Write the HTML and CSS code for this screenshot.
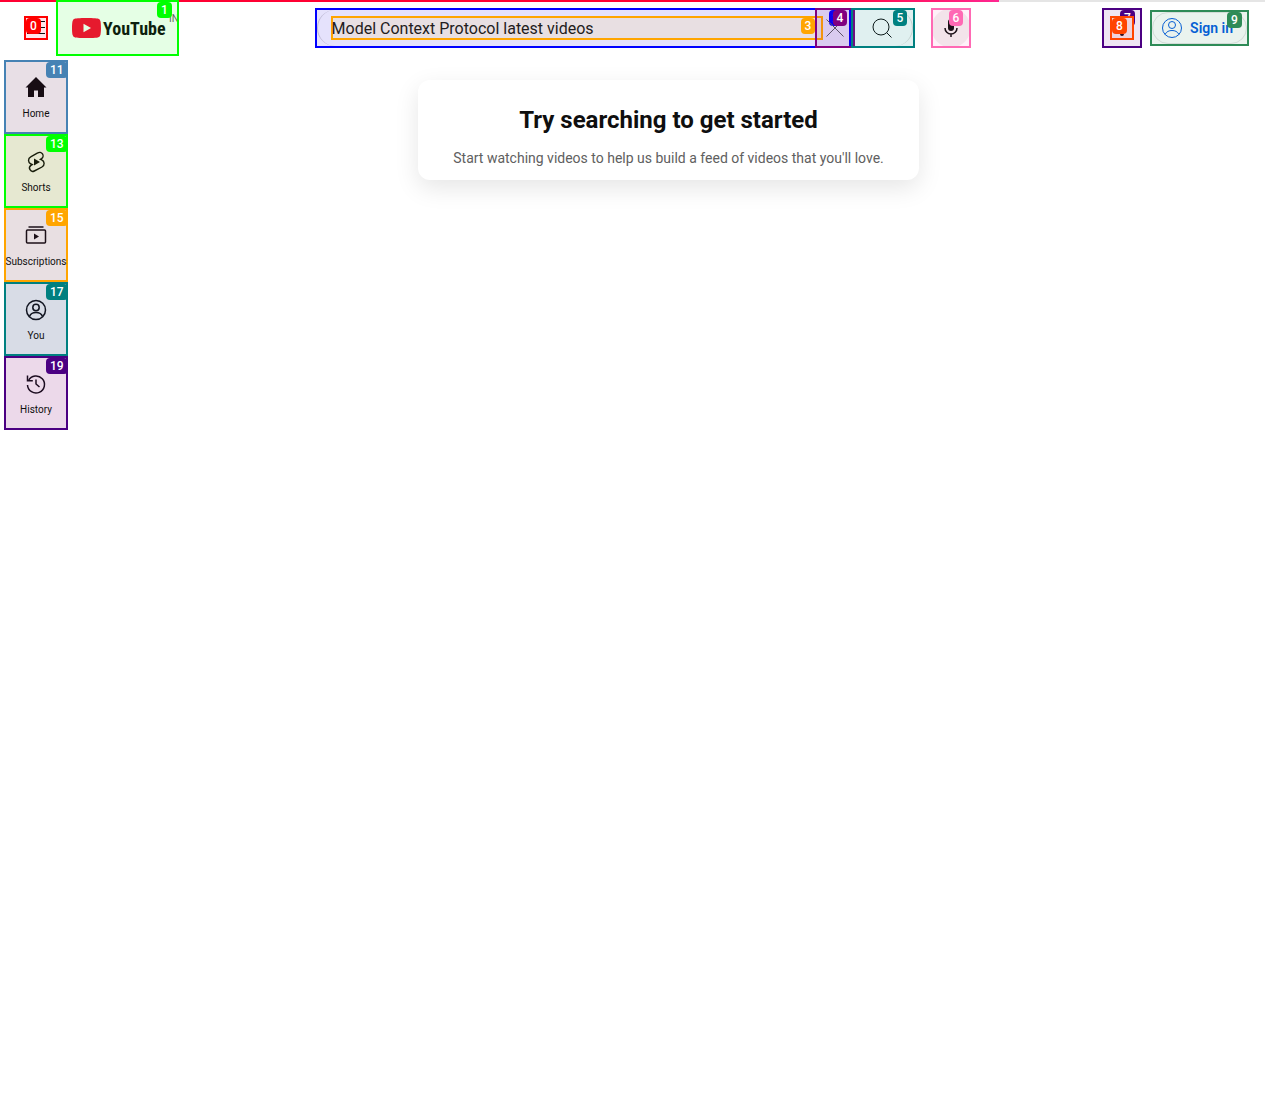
FILE: index.html
```html
<!DOCTYPE html>
<html lang="en">
<head>
<meta charset="utf-8">
<meta name="viewport" content="width=device-width, initial-scale=1">
<title>YouTube</title>
<link rel="stylesheet" href="styles.css">
</head>
<body>
<div class="progress"><div class="progress-fill"></div></div>
<header class="masthead">
  <div class="start">
    <button class="menu mark red" type="button" aria-label="Guide">
      <svg width="24" height="24" viewBox="0 0 24 24"><path d="M3 5.500h18M3 11.500h18M3 17.500h18" stroke="#0f0f0f" fill="none"/></svg>
      <span class="tag">0</span>
    </button>
    <a class="logo mark lime" href="#" aria-label="YouTube Home">
      <svg width="29" height="20" viewBox="0 0 29 20"><path d="M28.400 3.100A3.600 3.600 0 0 0 25.800.600C23.500 0 14.500 0 14.500 0S5.500 0 3.200.600A3.600 3.600 0 0 0 .600 3.100C0 5.400 0 10 0 10s0 4.600.600 6.900a3.600 3.600 0 0 0 2.600 2.500c2.300.600 11.300.600 11.300.600s9 0 11.300-.600a3.600 3.600 0 0 0 2.600-2.500C29 14.600 29 10 29 10s0-4.600-.600-6.900z" fill="#e61a2e"/><path d="M11.500 14.200 19 10l-7.500-4.200z" fill="#e5ffe5"/></svg>
      <span class="wordmark">YouTube</span>
      <span class="country">IN</span>
      <span class="tag">1</span>
    </a>
  </div>
  <form class="center">
    <div class="searchbox mark blue">
      <label class="field mark orange"><input type="text" aria-label="Search" value="Model Context Protocol latest videos"><span class="tag">3</span></label>
      <span class="tag">2</span>
      <button class="clear mark purple" type="button" aria-label="Clear search query">
        <svg width="24" height="24" viewBox="0 0 24 24"><path d="m3.500 3.500 17 17m0-17-17 17" stroke="#5b5367" fill="none"/></svg>
        <span class="tag">4</span>
      </button>
    </div>
    <button class="submit mark teal" type="button" aria-label="Search">
      <svg width="24" height="24" viewBox="0 0 24 24"><circle cx="11" cy="11" r="8" stroke="#0d1b1b" fill="none"/><path d="m16.500 16.500 5 5" stroke="#0d1b1b" fill="none"/></svg>
      <span class="tag">5</span>
    </button>
    <button class="mic mark pink" type="button" aria-label="Search with your voice">
      <svg width="24" height="24" viewBox="0 0 24 24"><rect x="9" y="3" width="6" height="12" rx="3" fill="#1c1018"/><path d="M6 12a6 6 0 0 0 12 0M12 18v3" stroke="#1c1018" stroke-width="1.500" fill="none"/></svg>
      <span class="tag">6</span>
    </button>
  </form>
  <div class="end">
    <button class="bell mark indigo" type="button" aria-label="Notifications">
      <span class="tag">7</span>
      <span class="bell-icon mark vermilion">
        <svg width="20" height="20" viewBox="0 0 20 20"><path d="M8 16h4a2 2 0 0 1-4 0z" fill="#301020"/></svg>
        <span class="tag">8</span>
      </span>
    </button>
    <a class="signin mark green" href="#">
      <svg width="24" height="24" viewBox="0 0 24 24" fill="none" stroke="#065fd4"><circle cx="12" cy="12" r="9.500"/><circle cx="12" cy="9" r="3.500"/><path d="M5 18.500c1.500-3 4-4 7-4s5.500 1 7 4"/></svg>
      <span>Sign in</span>
      <span class="tag">9</span>
    </a>
  </div>
</header>
<div class="page">
  <nav class="guide">
    <a class="entry mark steel" href="#">
      <svg width="24" height="24" viewBox="0 0 24 24"><path d="M1.500 11.500 12 1l10.500 10.500H20V21h-6v-6.500h-4V21H4v-9.500z" fill="#170d14"/></svg>
      <span>Home</span><span class="tag">11</span>
    </a>
    <a class="entry mark lime" href="#">
      <svg width="24" height="24" viewBox="0 0 24 24" fill="none" stroke="#171c0a" stroke-width="1.400"><path d="m13.700 2.900-7 3.900a4 4 0 0 0 .2 7.200l1.300.6-1.200.7a3.300 3.300 0 0 0 3.300 5.700l7.700-4a4 4 0 0 0-.3-7.200l-1.200-.5 1-.6a3.300 3.300 0 0 0-3.800-5.800z"/><path d="m10 8.500 6 3.500-6 3.500z" fill="#171c0a" stroke="none"/></svg>
      <span>Shorts</span><span class="tag">13</span>
    </a>
    <a class="entry mark orange" href="#">
      <svg width="24" height="24" viewBox="0 0 24 24" fill="none" stroke="#1c1018" stroke-width="1.500"><rect x="2.500" y="6" width="19" height="13" rx="1"/><path d="M4.500 3h15"/><path d="m10 9.500 5 3-5 3z" fill="#1c1018" stroke="none"/></svg>
      <span>Subscriptions</span><span class="tag">15</span>
    </a>
    <a class="entry mark teal you" href="#">
      <svg width="24" height="24" viewBox="0 0 24 24" fill="none" stroke="#111420" stroke-width="1.500"><circle cx="12" cy="12" r="9.500"/><circle cx="12" cy="9.500" r="3.200"/><path d="M5.500 18.500c1-3 3.500-4 6.500-4s5.500 1 6.500 4"/></svg>
      <span>You</span><span class="tag">17</span>
    </a>
    <a class="entry mark indigo" href="#">
      <svg width="24" height="24" viewBox="0 0 24 24" fill="none" stroke="#1c0c20" stroke-width="1.500"><path d="M4.500 8.500A8.500 8.500 0 1 1 3.500 13"/><path d="M3.500 3.500v5.300h5.300M12 7.500V12l3.500 3"/></svg>
      <span>History</span><span class="tag">19</span>
    </a>
  </nav>
  <main class="content">
    <section class="card">
      <h1>Try searching to get started</h1>
      <p>Start watching videos to help us build a feed of videos that you'll love.</p>
    </section>
  </main>
</div>
</body>
</html>
```
FILE: styles.css
```css
* { box-sizing: border-box; }
body {
  margin: 0;
  padding-right: 15px;
  background: #fff;
  color: #0f0f0f;
  font-family: Roboto, "Liberation Sans", sans-serif;
}
a { color: inherit; text-decoration: none; }
button { font: inherit; padding: 0; background: none; cursor: pointer; }
svg { display: block; flex: none; }

/* outlined controls with a numbered tag near the top right corner */
.mark { position: relative; border: 2px solid; border-color: var(--c); background-color: var(--tint); }
.red { --c: #ff0000; --tint: #ffe5e9; }
.lime { --c: #00ff00; --tint: #e5ffe5; }
.blue { --c: #0000ff; --tint: #e5e2fc; }
.orange { --c: #ffa500; --tint: #e8dfe2; }
.purple { --c: #800080; --tint: #8000801a; }
.teal { --c: #008080; --tint: #0080801f; }
.pink { --c: #ff69b4; --tint: #fff0f8; }
.indigo { --c: #4b0082; --tint: #ecd9ea; }
.vermilion { --c: #ff4500; --tint: #eed3da; }
.green { --c: #2e8b57; --tint: #eaf3ee; }
.steel { --c: #4682b4; --tint: #e8dfe6; }
.tag {
  position: absolute;
  top: 0;
  left: calc(100% - 20px);
  padding: 0 4px;
  border-radius: 4px;
  background: var(--c);
  color: #fff;
  font-size: 12px;
  font-weight: 500;
  line-height: 16px;
}

.progress { position: absolute; top: 0; left: 0; right: 15px; height: 2px; background: #e5e5e5; }
.progress-fill { width: 79%; height: 2px; background: linear-gradient(to right, #ff0033 80%, #ff2791); }

.masthead { display: flex; align-items: center; justify-content: space-between; height: 56px; padding: 0 16px; }
.start { display: flex; align-items: center; gap: 8px; width: 167px; padding-left: 8px; }
.menu { width: 24px; height: 24px; }
.menu svg { margin: -2px; }
.logo { display: flex; align-items: center; gap: 2px; width: 123px; height: 56px; padding-left: 14px; overflow: hidden; }
.wordmark { color: #0d1f0d; font-family: "Roboto Condensed", "Liberation Sans Narrow", Roboto, sans-serif; font-size: 18px; font-weight: 700; }
.country { position: absolute; top: 11px; left: 111px; color: #5b665b; font-size: 10px; line-height: 12px; }

.center { display: flex; align-items: center; width: 656px; }
.searchbox { display: flex; align-items: center; flex: 1; height: 40px; padding-left: 14px; }
.searchbox::before { content: ""; position: absolute; inset: 0; border: 1px solid #bdb9d2; border-width: 0 0 0 1px; border-radius: 18px 0 0 18px; }
.field { flex: 1; height: 24px; margin-right: -8px; }
.field input { display: block; width: 100%; height: 20px; padding: 0; margin-left: -1px; border: 0; outline: 0; background: none; color: #231c20; font: inherit; font-size: 16px; }
.clear { display: grid; place-items: center; width: 40px; height: 40px; margin-right: -6px; }
.submit { display: grid; place-items: center; width: 64px; height: 40px; padding-right: 2px; }
.submit::before { content: ""; position: absolute; inset: 0; border: 1px solid #c2cfce; border-width: 0 1px 0 0; border-radius: 0 18px 18px 0; }
.mic { display: grid; place-items: center; width: 40px; height: 40px; margin-left: 16px; background-image: radial-gradient(circle, #f3e3ea 19px, #fff0f8 20px); }

.end { display: flex; align-items: center; gap: 8px; }
.bell { display: grid; place-items: center; width: 40px; height: 40px; --tint: #efe5f3; }
.bell-icon { width: 24px; height: 24px; }
.signin { display: flex; align-items: center; gap: 6px; height: 36px; padding: 0 14px 0 8px; color: #065fd4; font-size: 14px; font-weight: 600; }
.signin::before { content: ""; position: absolute; inset: 0; border: 1px solid #d3dbd7; border-radius: 18px; }

.page { display: flex; align-items: flex-start; }
.guide { width: 72px; padding: 4px; }
.entry { display: flex; flex-direction: column; align-items: center; gap: 7px; height: 74px; padding-top: 14px; font-size: 10px; line-height: 14px; white-space: nowrap; }
.guide .lime { --tint: #e6e8d1; }
.you { --tint: #d8dce6; }
.content { display: flex; justify-content: center; flex: 1; padding: 24px; }
.card { width: 100%; max-width: 501px; padding: 24px 12px 12px; border-radius: 12px; background: #fff; box-shadow: 0 8px 24px rgba(0, 0, 0, .1); text-align: center; }
.card h1 { margin: 0 0 12px; font-size: 24px; font-weight: 700; line-height: 32px; }
.card p { margin: 0; color: #606060; font-size: 14px; line-height: 20px; }
```
